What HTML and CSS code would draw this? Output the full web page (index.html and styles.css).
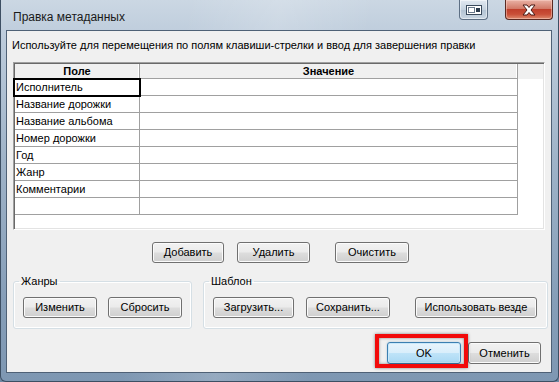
FILE: index.html
```html
<!DOCTYPE html>
<html lang="ru">
<head>
<meta charset="utf-8">
<title>Правка метаданных</title>
<link rel="stylesheet" href="styles.css">
</head>
<body>
<div class="window">
  <div class="titlebar">
    <span class="title">Правка метаданных</span>
    <div class="caption">
      <div class="cbtn restore">
        <svg width="16" height="10" viewBox="0 0 16 10"><rect x="0.5" y="0.5" width="15" height="9" fill="#fff" stroke="#3a4a5c"/><rect x="2.5" y="2.5" width="6" height="5" fill="none" stroke="#6a7a8c"/><rect x="10" y="3" width="4" height="4" fill="#2b3b4d"/></svg>
      </div>
      <div class="cbtn close">
        <svg width="16" height="12" viewBox="0 0 16 12"><path d="M2 1 L6 1 L8 3.5 L10 1 L14 1 L10 6 L14 11 L10 11 L8 8.5 L6 11 L2 11 L6 6 Z" fill="#fff" stroke="#4a1a14" stroke-width="1" stroke-linejoin="round"/></svg>
      </div>
    </div>
  </div>
  <div class="client">
    <div class="hint">Используйте для перемещения по полям клавиши-стрелки и ввод для завершения правки</div>
    <div class="grid">
      <div class="grid-head">
        <div class="hcell c1">Поле</div>
        <div class="hcell c2">Значение</div>
        <div class="hfill"></div>
      </div>
      <div class="row"><div class="cell c1 focus">Исполнитель</div><div class="cell c2"></div></div>
      <div class="row"><div class="cell c1">Название дорожки</div><div class="cell c2"></div></div>
      <div class="row"><div class="cell c1">Название альбома</div><div class="cell c2"></div></div>
      <div class="row"><div class="cell c1">Номер дорожки</div><div class="cell c2"></div></div>
      <div class="row"><div class="cell c1">Год</div><div class="cell c2"></div></div>
      <div class="row"><div class="cell c1">Жанр</div><div class="cell c2"></div></div>
      <div class="row"><div class="cell c1">Комментарии</div><div class="cell c2"></div></div>
      <div class="row"><div class="cell c1"></div><div class="cell c2"></div></div>
    </div>
    <div class="btn-row">
      <button class="btn b-add">Добавить</button>
      <button class="btn b-del">Удалить</button>
      <button class="btn b-clear">Очистить</button>
    </div>
    <div class="groups">
      <fieldset class="group g-genre">
        <legend>Жанры</legend>
        <button class="btn b-edit">Изменить</button>
        <button class="btn b-reset">Сбросить</button>
      </fieldset>
      <fieldset class="group g-tpl">
        <legend>Шаблон</legend>
        <button class="btn b-load">Загрузить...</button>
        <button class="btn b-save">Сохранить...</button>
        <button class="btn b-all">Использовать везде</button>
      </fieldset>
    </div>
    <div class="footer">
      <button class="btn ok">OK</button>
      <button class="btn b-cancel">Отменить</button>
    </div>
  </div>
  <div class="highlight"></div>
</div>
</body>
</html>
```

FILE: styles.css
```css
html, body {
  margin: 0;
  padding: 0;
  background: #6f88a3;
}
body {
  width: 559px;
  height: 382px;
  overflow: hidden;
  font-family: "Liberation Sans", Arial, sans-serif;
  font-size: 11px;
  color: #000;
}
.window {
  position: relative;
  box-sizing: border-box;
  width: 559px;
  height: 382px;
  padding: 0 6px 8px 5px;
  border: 1px solid #3d4f63;
  border-top: none;
  border-radius: 0 0 6px 6px;
  display: flex;
  flex-direction: column;
  background:
    linear-gradient(100deg, rgba(255,255,255,0) 30%, rgba(255,255,255,0.18) 45%, rgba(255,255,255,0) 60%),
    linear-gradient(to bottom, #cbd7e3 0px, #bccbdb 40px, #9fb3c8 160px, #869eb8 300px, #7e97b2 382px);
}
.titlebar {
  height: 30px;
  display: flex;
  align-items: flex-start;
  position: relative;
}
.title {
  margin: 10px 0 0 7px;
  font-size: 12px;
  line-height: 15px;
  color: #1a1a1a;
}
.caption {
  margin-left: auto;
  display: flex;
  margin-right: 0;
}
.cbtn {
  height: 20px;
  box-sizing: border-box;
  display: flex;
  align-items: center;
  justify-content: center;
  border: 1px solid #5d6f84;
  border-top: none;
  border-radius: 0 0 4px 4px;
}
.restore {
  width: 29px;
  background: linear-gradient(#e2e9f1, #c5d2df 50%, #b3c3d3 51%, #c9d6e2);
  box-shadow: inset 0 0 0 1px rgba(255,255,255,0.5);
  margin-right: 17px;
}
.close {
  width: 48px;
  margin-right: -1px;
  border-color: #5a2a22;
  background: linear-gradient(#e9b2a5, #d27a68 45%, #c0402c 50%, #c94f38 75%, #dd8a6d);
  box-shadow: inset 0 0 0 1px rgba(255,220,210,0.45);
}
.client {
  flex: 1;
  background: #f0f0f0;
  border: 1px solid #4f6176;
  display: flex;
  flex-direction: column;
}
.hint {
  height: 31px;
  box-sizing: border-box;
  padding: 7px 0 0 5px;
  line-height: 15px;
  white-space: nowrap;
}
.grid {
  margin: 0 6px;
  height: 168px;
  box-sizing: border-box;
  border-style: solid;
  border-width: 1px;
  border-color: #a0a0a0 #ffffff #ffffff #a0a0a0;
  box-shadow: inset 1px 1px 0 #696969, inset -1px -1px 0 #e3e3e3;
  background: #fff;
  padding: 1px 1px 1px 1px;
  font-size: 11px;
}
.grid-head {
  display: flex;
  height: 15px;
  background: #f0f0f0;
}
.hcell {
  box-sizing: border-box;
  height: 15px;
  border-bottom: 1px solid #a0a0a0;
  border-right: 1px solid #a0a0a0;
  box-shadow: inset -1px 0 0 #fff;
  font-weight: bold;
  text-align: center;
  line-height: 14px;
}
.hfill {
  flex: 1;
}
.c1 { width: 125px; }
.c2 { width: 378px; }
.row {
  display: flex;
  height: 17px;
}
.cell {
  box-sizing: border-box;
  height: 17px;
  border-bottom: 1px solid #a0a0a0;
  border-right: 1px solid #a0a0a0;
  line-height: 16px;
  padding-left: 1px;
  white-space: nowrap;
}
.focus {
  outline: 2px solid #000;
  outline-offset: -1px;
  position: relative;
  margin-left: -1px;
  padding-left: 2px;
  width: 126px;
}
.btn {
  box-sizing: border-box;
  height: 21px;
  padding: 0;
  border: 1px solid #707070;
  border-radius: 3px;
  background: linear-gradient(#f2f2f2 0%, #ebebeb 48%, #dddddd 52%, #cfcfcf 100%);
  box-shadow: inset 0 0 0 1px #fbfbfb;
  font-family: "Liberation Sans", Arial, sans-serif;
  font-size: 11px;
  line-height: 19px;
  color: #000;
  text-align: center;
}
.btn-row {
  display: flex;
  margin-top: 12px;
  height: 21px;
}
.b-add { width: 72px; margin-left: 145px; }
.b-del { width: 73px; margin-left: 13px; }
.b-clear { width: 74px; margin-left: 25px; }
.groups {
  display: flex;
  margin-top: 12px;
}
.group {
  position: relative;
  box-sizing: border-box;
  height: 54px;
  margin: 0;
  padding: 0;
  border: 1px solid #d5dfe5;
  border-radius: 3px;
  box-shadow: inset 0 0 0 1px #fff;
  display: flex;
  align-items: flex-start;
  min-width: 0;
}
.group legend {
  padding: 0 2px;
  margin-left: 5px;
  line-height: 13px;
  font-size: 11px;
}
.g-genre { width: 179px; margin-left: 6px; }
.g-tpl { width: 345px; margin-left: 11px; }
.group .btn { margin-top: 9px; }
.b-edit { width: 74px; margin-left: 9px; }
.b-reset { width: 74px; margin-left: 11px; }
.b-load { width: 81px; margin-left: 9px; }
.b-save { width: 84px; margin-left: 12px; }
.b-all { width: 122px; margin-left: 25px; }
.footer {
  display: flex;
  margin-top: 13px;
  height: 22px;
}
.footer .btn { height: 22px; line-height: 20px; }
.ok {
  width: 74px;
  margin-left: 380px;
  border-color: #3c7fb1;
  background: linear-gradient(#e8f4fc 0%, #d9eefb 48%, #bee3f8 52%, #a9d8f3 100%);
  box-shadow: inset 0 0 0 1px #c9e8fa, 0 0 2px rgba(60,127,177,0.4);
}
.b-cancel { width: 73px; margin-left: 7px; }
.highlight {
  position: absolute;
  left: 374px;
  top: 334px;
  width: 93px;
  height: 34px;
  box-sizing: border-box;
  border: 4px solid #f20a0a;
  box-shadow: 0 0 3px rgba(0,0,0,0.45), inset 0 0 3px rgba(0,0,0,0.45);
}
```
